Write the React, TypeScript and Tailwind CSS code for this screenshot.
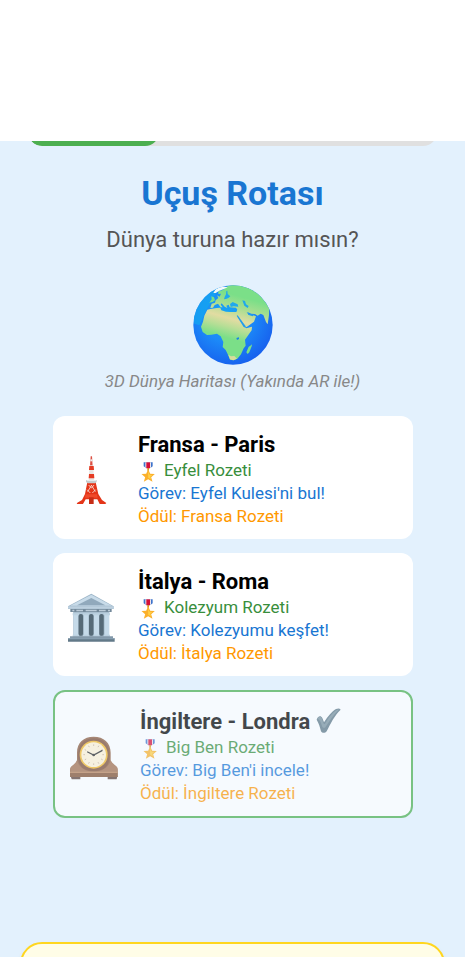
import type { ReactNode } from "react";

function Globe() {
  return (
    <svg viewBox="36 29 240 240" className="h-20 w-20" role="img" aria-label="Dünya">
      <defs>
        <radialGradient id="sea" cx="0.42" cy="0.38" r="0.65">
          <stop offset="0" stopColor="#16a8f4" />
          <stop offset="0.5" stopColor="#1c8af8" />
          <stop offset="1" stopColor="#1760ee" />
        </radialGradient>
        <linearGradient id="land" gradientUnits="userSpaceOnUse" x1="165" y1="60" x2="130" y2="185">
          <stop offset="0" stopColor="#7bdf88" />
          <stop offset="0.25" stopColor="#a5de90" />
          <stop offset="0.55" stopColor="#e2dca2" />
          <stop offset="0.75" stopColor="#b8de96" />
          <stop offset="1" stopColor="#7bdf88" />
        </linearGradient>
        <clipPath id="disc"><circle cx="156" cy="149" r="119" /></clipPath>
      </defs>
      <circle cx="156" cy="149" r="119" fill="url(#sea)" />
      <g clipPath="url(#disc)">
        <path d="M36 112C48 70 82 38 120 29L90 80 76 104 55 150 40 145Z" fill="#14a5f0" opacity=".75" />
        <path fill="url(#land)" d="M92 85L102 82 104 75 112 68 108 60 116 64 120 55 112 56 112 48 126 44 134 35 150 29 190 30 235 55 265 95 264 120 260 147 255 140 247 119 239 115 230 121 222 116 211 115 199 110 203 119 215 119 225 123 219 139 197 155 193 154 196 159 213 154 212 165 192 193 194 211 188 219 180 237 169 250 157 255 147 253 141 238 134 224 125 215 127 200 119 183 108 175 91 178 78 179 65 170 60 154 66 139 70 121 79 103 88 101 107 98 118 97 121 105 135 109 148 110 166 110 169 103 165 97 146 96 143 88 136 91 139 98 131 94 122 84 119 88 125 96 119 96 111 85 101 89 96 97 88 98Z" />
        <path fill="#20a9eb" d="M147 86L155 80 170 87 172 94 158 93 149 95ZM184 75L192 77 195 87 203 92 200 98 190 91ZM131 65L135 57 136 47 139 46 140 56 148 63 143 67 137 70 129 72Z" />
        <path d="M170 120L182 136 193 151 196 158 188 155 177 138 167 121Z" fill="#229ceb" />
        <path d="M197 111L207 116 219 118 215 123 203 119Z" fill="#229ceb" />
        <path d="M213 207L208 211 203 214 196 231 200 236 205 231 212 213Z" fill="#7bdf88" />
        <path d="M166 188L174 186 174 191 168 194Z" fill="#1a83e8" />
        <path d="M147 252L142 238 150 243 160 242 168 250 157 255Z" fill="#d6dc9c" />
        <path d="M85 82L92 72 91 63 99 66 102 75 95 80Z" fill="#7bdf88" />
        <path d="M97 53L104 42 121 32 140 36 127 42 115 46 104 53Z" fill="#f3f9f9" />
      </g>
    </svg>
  );
}

function Tower() {
  return (
    <svg viewBox="48 132 150 150" className="h-[50px] w-[50px]" role="img" aria-label="Kule">
      <path d="M122 136h4l2 29h-8z" fill="#dc5144" />
      <path d="M121 145h6v6h-6z" fill="#eee" />
      <path d="M119 163h11l2 48h-16z" fill="#e8e5e2" />
      <path d="M118 165h13l1 12h-15zM117 189h15l1 13h-17z" fill="#e53b23" />
      <path d="M112 214h25l8 35 11 18 13 9-3 3h-17l-7-14h-35l-8 14H80l2-4 14-8 9-18z" fill="#e43518" />
      <path d="M107 250h34l2 10h-38z" fill="#ef4a2b" />
      <path d="M117 259h14v20h-14z" fill="#c62d17" />
      <path d="M116 222l8 9M125 222l-12 20M124 222l12 20M132 222l-8 10M111 236l10 10M137 236l-10 10" stroke="#f6ddd7" strokeWidth="2.500" />
      <path d="M108 207h32v6l-5 4h-22l-5-4z" fill="#c5cbcd" />
      <path d="M110 207h28v3h-28z" fill="#e7ebeb" />
    </svg>
  );
}

function Museum() {
  return (
    <svg viewBox="48 123 150 150" className="h-[50px] w-[50px]" role="img" aria-label="Müze">
      <path d="M70 181h107v76H70z" fill="#93a9b9" />
      <path d="M54 166l70-38 67 38v8H54z" fill="#9bb4c7" />
      <path d="M60 164l64-33 62 33z" fill="#c8dbe9" />
      <path d="M81 163l43-22 42 22z" fill="#91a9bc" />
      <path d="M54 166h137v7H54z" fill="#bdd0df" />
      <path d="M61 174h124v9H61z" fill="#73899a" />
      <path d="M67 176h6v5h-6zM79 176h20v5H79zM107 176h33v5h-33zM147 176h20v5h-20zM174 176h6v5h-6z" fill="#bdcdda" />
      <path d="M69 184h110v7H69z" fill="#b2c8d9" />
      {[70, 101, 132, 163].map((x) => (
        <g key={x}>
          <path d={`M${x} 189h15v67h-15z`} fill="#c5dae9" />
          <path d={`M${x - 2} 187h19v6h-19zM${x - 2} 251h19v6h-19z`} fill="#bdd2e1" />
        </g>
      ))}
      {[86, 117, 148].map((x) => (
        <rect key={x} x={x} y="189" width="13" height="65" rx="6" fill="#566a77" />
      ))}
      <path d="M60 256h129v7H60z" fill="#8399aa" />
      <path d="M54 262h140v10H54z" fill="#627988" />
      <path d="M54 262h140v3H54z" fill="#90a7b8" />
    </svg>
  );
}

function MantelClock() {
  return (
    <svg viewBox="54 138 150 150" className="h-[50px] w-[50px]" role="img" aria-label="Saat">
      <path d="M62 273h29v10H65zM173 273h29l-2 10h-27z" fill="#5d4037" />
      <path d="M60 276v-22c0-10 18-14 21-28V203c0-30 20-48 50-48s51 18 51 48v23c3 14 21 18 21 28v22z" fill="#8d5b3d" />
      <path d="M84 211c0-32 17-51 47-51s48 19 48 51c0 34-18 47-48 47s-47-13-47-47z" fill="#7b4a32" />
      <path d="M61 251c0-9 16-13 20-25 6 21 24 34 50 34s45-13 51-34c5 12 21 16 21 25v11H61z" fill="#a26e4c" />
      <path d="M60 262h143v14H60z" fill="#81502f" />
      <path d="M60 260h143v4H60z" fill="#b98259" />
      <circle cx="131" cy="209" r="42" fill="#f4b828" />
      <circle cx="131" cy="209" r="37" fill="#fff1d5" />
      {[0, 30, 60, 90, 120, 150, 180, 210, 240, 270, 300, 330].map((angle) => (
        <path key={angle} d="M131 178v5" transform={`rotate(${angle} 131 209)`} stroke="#b39a80" strokeWidth="2" />
      ))}
      <path d="M113 201l18 9 25-13" fill="none" stroke="#262626" strokeWidth="4" strokeLinecap="round" />
      <circle cx="131" cy="210" r="4" fill="#262626" />
    </svg>
  );
}

function Medal() {
  return (
    <svg viewBox="12 8 51 66" className="h-[22px] w-[17px] shrink-0" aria-hidden="true">
      <path d="M23 15h27v12l-6 4H29l-6-4z" fill="#3d74cc" />
      <path d="M28 15h17v16H28z" fill="#f1e3e8" />
      <path d="M31 15h11v18H31z" fill="#d5103a" />
      <path d="M34 32h5v8h-5z" fill="#d89020" />
      <path d="M36.500 36l6 13 14 1-11 10 4 13-13-7-13 7 4-13-11-10 14-1z" fill="#fbb02b" />
      <path d="M36.500 42l4 10 9 1-7 5 3 8-9-5z" fill="#ffcf45" />
    </svg>
  );
}

function CheckMark() {
  return (
    <svg viewBox="254 66 78 87" className="h-[29px] w-[26px]" role="img" aria-label="Tamamlandı">
      <path d="M256 104c3-10 12-14 17-5l5 13c13-20 23-32 36-40 7-3 11-2 14 2-19 18-30 41-42 65-5 6-13 6-17 0-3-12-6-23-13-35z" fill="#5c7685" />
      <path d="M257 102c4-7 10-10 14-3l6 17 3 2c13-23 24-36 38-44l6-1c-18 16-29 36-43 55-5 1-8-1-9-5-4-13-7-20-15-21z" fill="#78909c" />
    </svg>
  );
}

type StopProps = {
  icon: ReactNode;
  title: string;
  badge: string;
  task: string;
  reward: string;
  done?: boolean;
};

function StopCard({ icon, title, badge, task, reward, done = false }: StopProps) {
  return (
    <li
      className={`flex items-center gap-[22px] rounded-xl bg-white px-[13px] pt-[15px] pb-[11px] ${
        done ? "border-2 border-[#4caf50] opacity-70" : ""
      }`}
    >
      <div className="shrink-0">{icon}</div>
      <div className="min-w-0 text-[17px] leading-[23px]">
        <h2 className="flex items-center gap-[6px] text-[22px] leading-7 font-bold text-black">
          {title}
          {done && <CheckMark />}
        </h2>
        <p className="flex items-center gap-[7px] pl-[2px] text-[#388e3c]">
          <Medal />
          <span>{badge}</span>
        </p>
        <p className="text-[#1976d2]">{task}</p>
        <p className="text-[#ff9800]">{reward}</p>
      </div>
    </li>
  );
}

export default function App() {
  return (
    <div className="h-screen overflow-hidden bg-white pr-[9px] font-['Roboto',sans-serif]">
      <header className="h-[141px] bg-white" />
      <main className="bg-[#e3f1fd]">
        <div className="flex h-[5px] flex-col justify-end overflow-hidden pr-7 pl-7">
          <div
            className="h-7 shrink-0 overflow-hidden rounded-full bg-[#e0e0e0]"
            role="progressbar"
            aria-label="İlerleme"
            aria-valuenow={32}
          >
            <div className="h-full w-[32%] rounded-full bg-[#4caf50]" />
          </div>
        </div>

        <section className="flex flex-col items-center pt-[27px] text-center">
          <h1 className="text-[34px] leading-10 font-bold text-[#1976d2]">Uçuş Rotası</h1>
          <p className="mt-[13px] text-[22px] leading-7 text-[#555]">Dünya turuna hazır mısın?</p>
          <div className="mt-[31px]">
            <Globe />
          </div>
          <p className="mt-1 text-[17px] leading-6 text-[#888] italic">3D Dünya Haritası (Yakında AR ile!)</p>
        </section>

        <ul className="mt-[23px] flex flex-col gap-[14px] pr-[52px] pl-[53px]">
          <StopCard
            icon={<Tower />}
            title="Fransa - Paris"
            badge="Eyfel Rozeti"
            task="Görev: Eyfel Kulesi'ni bul!"
            reward="Ödül: Fransa Rozeti"
          />
          <StopCard
            icon={<Museum />}
            title="İtalya - Roma"
            badge="Kolezyum Rozeti"
            task="Görev: Kolezyumu keşfet!"
            reward="Ödül: İtalya Rozeti"
          />
          <StopCard
            icon={<MantelClock />}
            title="İngiltere - Londra"
            badge="Big Ben Rozeti"
            task="Görev: Big Ben'i incele!"
            reward="Ödül: İngiltere Rozeti"
            done
          />
        </ul>

        <section className="mt-[124px] px-5">
          <div className="h-28 rounded-[22px] border-2 border-[#ffd61f] bg-[#fffde7] shadow-md" />
        </section>
      </main>
    </div>
  );
}
